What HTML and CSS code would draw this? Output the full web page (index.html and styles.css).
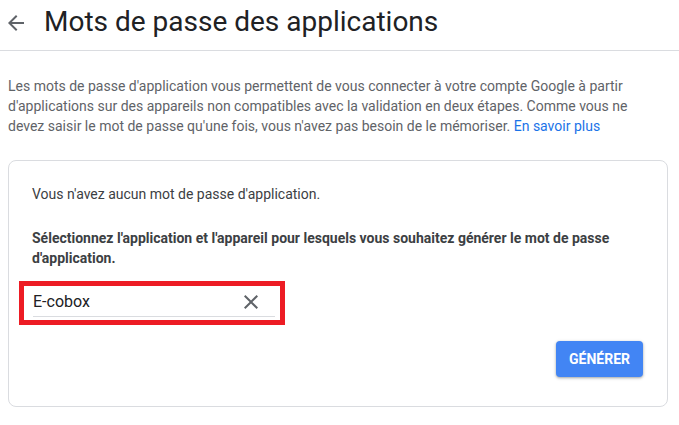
FILE: index.html
```html
<!DOCTYPE html>
<html lang="fr">
<head>
<meta charset="utf-8">
<title>Mots de passe des applications</title>
<link rel="stylesheet" href="styles.css">
</head>
<body>
<header class="header">
  <svg class="back" width="24" height="24" viewBox="0 0 24 24" aria-hidden="true"><path d="M20 11H7.83l5.59-5.59L12 4l-8 8 8 8 1.41-1.41L7.830 13H20v-2z"/></svg>
  <h1 class="title">Mots de passe des applications</h1>
</header>
<p class="intro">Les mots de passe d'application vous permettent de vous connecter à votre compte Google à partir d'applications sur des appareils non compatibles avec la validation en deux étapes. Comme vous ne devez saisir le mot de passe qu'une fois, vous n'avez pas besoin de le mémoriser. <a class="link" href="#">En savoir plus</a></p>
<section class="card">
  <p class="none">Vous n'avez aucun mot de passe d'application.</p>
  <p class="select">Sélectionnez l'application et l'appareil pour lesquels vous souhaitez générer le mot de passe d'application.</p>
  <div class="highlight">
    <div class="field">
      <span class="value">E-cobox</span>
      <svg class="clear" width="24" height="24" viewBox="0 0 24 24" aria-hidden="true"><path d="M19 6.41L17.59 5 12 10.59 6.41 5 5 6.41 10.59 12 5 17.59 6.41 19 12 13.41 17.59 19 19 17.59 13.41 12z"/></svg>
    </div>
  </div>
  <div class="actions">
    <button class="generate" type="button">GÉNÉRER</button>
  </div>
</section>
</body>
</html>
```
FILE: styles.css
```css
* { box-sizing: border-box; }
html, body { margin: 0; padding: 0; background: #fff; }
body {
  font-family: Roboto, "Liberation Sans", Arial, sans-serif;
  color: #3c4043;
  width: 679px;
}
.header {
  display: flex;
  align-items: center;
  padding: 6px 0 12px;
  border-bottom: 1px solid #dadce0;
}
.back {
  fill: #5f6368;
  margin: 2px 17px 0 4px;
  flex: none;
}
.title {
  margin: 0;
  font-size: 28px;
  line-height: 32px;
  font-weight: 400;
  color: #202124;
  margin-left: -1px;
}
.intro {
  margin: 25px 8px 0;
  width: 648px;
  font-size: 14px;
  line-height: 20px;
  color: #5f6368;
}
.link { color: #1a73e8; text-decoration: none; }
.card {
  margin: 24px 0 0 8px;
  width: 660px;
  border: 1px solid #dadce0;
  border-radius: 8px;
  padding: 23px 23px 29px;
}
.none {
  margin: 0;
  font-size: 14px;
  line-height: 20px;
  color: #3c4043;
}
.select {
  margin: 24px 0 0;
  font-size: 14px;
  line-height: 20px;
  font-weight: 700;
  color: #3c4043;
}
.highlight {
  margin: 13px 0 0 -13px;
  width: 266px;
  height: 44px;
  border: 5px solid #ed1c24;
  padding: 0 0 0 9px;
}
.field {
  display: flex;
  align-items: center;
  width: 242px;
  height: 31px;
  border-bottom: 1px solid #dadce0;
}
.value {
  flex: 1;
  font-size: 16px;
  line-height: 20px;
  color: #202124;
  padding-top: 2px;
}
.clear {
  fill: #5f6368;
  flex: none;
  margin: 2px 12px 0 0;
}
.actions {
  display: flex;
  justify-content: flex-end;
  margin-top: 16px;
}
.generate {
  height: 36px;
  padding: 0 13px;
  margin-right: 1px;
  border: none;
  border-radius: 4px;
  background: #4285f4;
  color: #fff;
  font-family: Roboto, "Liberation Sans", Arial, sans-serif;
  font-size: 14px;
  font-weight: 700;
  letter-spacing: 0;
  box-shadow: 0 1px 2px rgba(60,64,67,.3), 0 1px 3px 1px rgba(60,64,67,.15);
}
```
